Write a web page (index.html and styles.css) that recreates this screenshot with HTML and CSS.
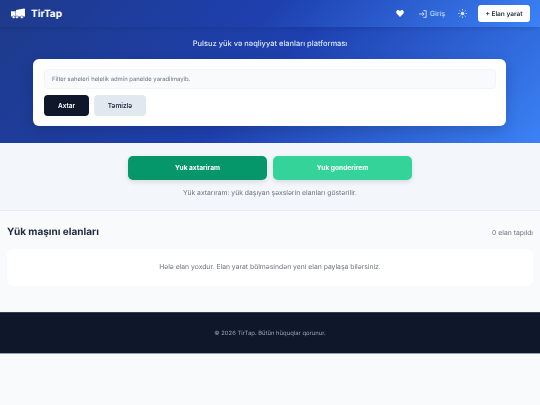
FILE: index.html

```html
<!DOCTYPE html>
<html lang="az">
<head>
  <meta charset="UTF-8" />
  <title>TirTap</title>
  <link rel="stylesheet" href="styles.css">
</head>
<body>

  <!-- Header and hero share one gradient -->
  <div class="top">
    <header class="navbar">
      <a class="brand">
        <svg class="brand-icon" viewBox="0 0 14 11" width="14" height="11">
          <path fill="#fff" d="M0 3.300h4.600V8.600H0zM5 2 13.200.4c.5 0 .8.300.8.800v7.400H5z"/>
          <circle cx="2.600" cy="9.200" r="1.400" fill="#fff" stroke="#1e3a8a" stroke-width=".5"/>
          <circle cx="6" cy="9.200" r="1.400" fill="#fff" stroke="#1e3a8a" stroke-width=".5"/>
          <circle cx="10.800" cy="9.200" r="1.400" fill="#fff" stroke="#1e3a8a" stroke-width=".5"/>
        </svg>
        <span>TirTap</span>
      </a>
      <nav class="nav-links">
        <svg class="nav-icon heart" viewBox="0 0 12 11" width="8" height="7">
          <path fill="#fff" d="M6 11 1 6C-.4 4.500-.3 2 1.200.8 2.800-.4 4.800.1 6 1.800 7.200.1 9.200-.4 10.800.8 12.300 2 12.400 4.500 11 6z"/>
        </svg>
        <a class="login">
          <svg class="nav-icon" viewBox="0 0 12 12" width="8" height="8">
            <path fill="none" stroke="#dbeafe" stroke-width="1.300" d="M6.500 1h4.300v10H6.500M0 6h7.500M5 3.300 7.700 6 5 8.700"/>
          </svg>
          <span>Giriş</span>
        </a>
        <svg class="nav-icon sun" viewBox="0 0 12 12" width="9" height="9">
          <circle cx="6" cy="6" r="2.300" fill="#dbeafe"/>
          <path stroke="#dbeafe" stroke-width="1" d="M6 0v2M6 10v2M0 6h2M10 6h2M1.800 1.800l1.400 1.400M8.800 8.800l1.400 1.400M1.800 10.200l1.400-1.400M8.800 3.200l1.400-1.400"/>
        </svg>
        <a class="create-btn">+ Elan yarat</a>
      </nav>
    </header>

    <section class="hero">
      <p class="hero-title">Pulsuz yük və nəqliyyat elanları platforması</p>
      <div class="filter-card">
        <div class="filter-note">Filter saheleri helelik admin panelde yaradilmayib.</div>
        <div class="filter-actions">
          <button class="btn btn-dark">Axtar</button>
          <button class="btn btn-light">Təmizlə</button>
        </div>
      </div>
    </section>
  </div>

  <!-- Mode switch -->
  <section class="mode">
    <div class="mode-buttons">
      <button class="mode-btn mode-active">Yuk axtariram</button>
      <button class="mode-btn mode-other">Yuk gonderirem</button>
    </div>
    <p class="mode-text">Yük axtarıram: yük daşıyan şəxslərin elanları göstərilir.</p>
  </section>

  <!-- Listings -->
  <main class="listings">
    <div class="listings-head">
      <h2>Yük maşını elanları</h2>
      <span class="count">0 elan tapıldı</span>
    </div>
    <div class="empty">Hələ elan yoxdur. Elan yarat bölməsindən yeni elan paylaşa bilərsiniz.</div>
  </main>

  <footer class="footer">© 2026 TirTap. Bütün hüquqlar qorunur.</footer>

</body>
</html>
```

FILE: styles.css

```css
* {
  box-sizing: border-box;
}

body {
  margin: 0;
  font-family: 'Inter', sans-serif;
  background: #f8fafc;
  color: #1e293b;
  text-rendering: geometricPrecision;
  filter: blur(0.4px);
}

.top {
  height: 143px;
  background: linear-gradient(135deg, #1e3a8a 0%, #1e40af 50%, #3b82f6 100%);
}

/* Navbar */
.navbar {
  height: 27px;
  padding: 0 10px 0 11px;
  display: flex;
  justify-content: space-between;
  align-items: center;
  background: linear-gradient(135deg, #1e3a8a 0%, #1e40af 50%, #3b82f6 100%);
  box-shadow: 0 1px 4px rgba(15, 23, 42, 0.15);
}

.brand {
  display: flex;
  align-items: center;
  gap: 6px;
  color: #fff;
  font-size: 10px;
  font-weight: 700;
}

.nav-links {
  display: flex;
  align-items: center;
}

.nav-icon {
  display: block;
}

.heart {
  margin-right: 15px;
}

.login {
  display: flex;
  align-items: center;
  gap: 3px;
  color: #bfdbfe;
  font-size: 7px;
  font-weight: 500;
  margin-right: 13px;
}

.sun {
  margin-right: 11px;
}

.create-btn {
  width: 52px;
  height: 17px;
  display: flex;
  justify-content: center;
  align-items: center;
  background: #fff;
  border-radius: 3px;
  color: #1e293b;
  font-size: 6.500px;
  font-weight: 600;
}

/* Hero */
.hero {
  padding-top: 12px;
}

.hero-title {
  margin: 0 0 10px;
  height: 10px;
  line-height: 10px;
  text-align: center;
  color: #dfe7f7;
  font-size: 7.500px;
  font-weight: 500;
}

.filter-card {
  width: 473px;
  height: 67px;
  margin-left: 33px;
  padding: 10px 10px 0 11px;
  background: #fff;
  border-radius: 6px;
  box-shadow: 0 4px 14px rgba(15, 23, 42, 0.2);
}

.filter-note {
  height: 20px;
  line-height: 19px;
  padding-left: 7px;
  background: #f8fafc;
  border: 1px solid #f1f5f9;
  border-radius: 4px;
  color: #6b7280;
  font-size: 5.900px;
}

.filter-actions {
  display: flex;
  gap: 5px;
  margin-top: 6px;
}

.btn {
  height: 21px;
  border: none;
  border-radius: 4px;
  font-family: inherit;
  font-size: 6.500px;
  font-weight: 600;
}

.btn-dark {
  width: 45px;
  background: #0f172a;
  color: #fff;
}

.btn-light {
  width: 52px;
  background: #e2e8f0;
  color: #1e293b;
}

/* Mode switch */
.mode {
  height: 68px;
  padding-top: 13px;
  background: #f3f6fa;
  border-bottom: 1px solid #e8edf3;
}

.mode-buttons {
  display: flex;
  justify-content: center;
  gap: 6px;
}

.mode-btn {
  width: 139px;
  height: 24px;
  border: none;
  border-radius: 5px;
  color: #fff;
  font-family: inherit;
  font-size: 6.600px;
  font-weight: 700;
  box-shadow: 0 2px 5px rgba(15, 23, 42, 0.12);
}

.mode-active {
  background: #059669;
}

.mode-other {
  background: #34d399;
}

.mode-text {
  margin: 8px 0 0;
  text-align: center;
  color: #6b7280;
  font-size: 6.800px;
  line-height: 9px;
}

/* Listings */
.listings {
  height: 101px;
  padding: 14px 7px 0;
}

.listings-head {
  display: flex;
  justify-content: space-between;
  align-items: center;
  height: 14px;
  margin-bottom: 10px;
}

.listings-head h2 {
  margin: 0;
  font-size: 10px;
  font-weight: 700;
  color: #1e293b;
}

.count {
  font-size: 6.800px;
  color: #6b7280;
}

.empty {
  height: 37px;
  line-height: 36px;
  text-align: center;
  background: #fff;
  border-radius: 6px;
  color: #6b7280;
  font-size: 6.800px;
}

/* Footer */
.footer {
  height: 42px;
  line-height: 41px;
  text-align: center;
  background: #0f172a;
  border-top: 1px solid #334155;
  border-bottom: 1px solid #94a3b8;
  color: #94a3b8;
  font-size: 5.900px;
}
```
